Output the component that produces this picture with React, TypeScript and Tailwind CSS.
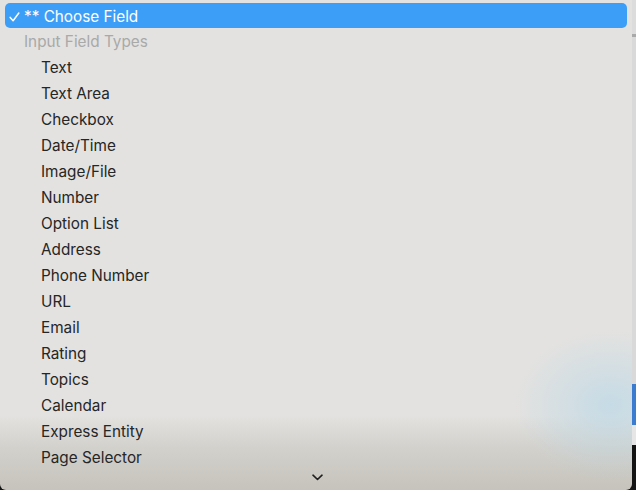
import React from "react";

const fieldTypes = [
  "Text",
  "Text Area",
  "Checkbox",
  "Date/Time",
  "Image/File",
  "Number",
  "Option List",
  "Address",
  "Phone Number",
  "URL",
  "Email",
  "Rating",
  "Topics",
  "Calendar",
  "Express Entity",
  "Page Selector",
];

const ChevronDown: React.FC = () => (
  <svg width="11" height="7" viewBox="0 0 11 7" fill="none">
    <path d="M1 1.2l4.5 4.3L10 1.2" stroke="#1f1f1f" strokeWidth="1.6" strokeLinecap="round" strokeLinejoin="round" />
  </svg>
);

const CheckMark: React.FC = () => (
  <svg width="11" height="10" viewBox="0 0 11 10" fill="none">
    <path d="M1.2 5.4l2.9 3.3L9.8 1" stroke="white" strokeWidth="1.5" strokeLinecap="round" strokeLinejoin="round" />
  </svg>
);

const FieldMenu: React.FC = () => {
  return (
    <div
      className="relative w-[632px] h-[490px] overflow-hidden rounded-b-[6px] bg-[radial-gradient(ellipse_95px_75px_at_610px_405px,rgba(185,216,232,0.7),rgba(185,216,232,0)),linear-gradient(to_bottom,#e3e2e0_0px,#e3e2e0_415px,#d3d1cc_448px,#c5c3bb_490px)] text-[15.3px] leading-none text-[#262626] font-['Inter','Liberation_Sans',sans-serif]"
    >
      <div className="mx-[5px] mt-[3px] h-[25px] pt-[2px] rounded-[5px] bg-[#3d9ef7] flex items-center text-white">
        <span className="w-[19px] pl-[4px] flex items-center">
          <CheckMark />
        </span>
        <span>** Choose Field</span>
      </div>
      <div className="h-[26px] pt-[2px] flex items-center pl-[24px] text-[#a9a9a9]">Input Field Types</div>
      {fieldTypes.map((name) => (
        <div key={name} className="h-[26px] pt-[2px] flex items-center pl-[41px]">
          {name}
        </div>
      ))}
      <div className="absolute left-[312px] bottom-[9px]">
        <ChevronDown />
      </div>
    </div>
  );
};

export default function App() {
  return (
    <div className="flex w-[636px] h-[490px] bg-[#161616]">
      <FieldMenu />
      <div className="w-[4px] flex flex-col">
        <div className="h-[34px] bg-[#dcdcdc]" />
        <div className="h-[3px] bg-[#a9a9a9]" />
        <div className="h-[347px] bg-[#d9d9d9]" />
        <div className="h-[41px] bg-[#3b7bd0]" />
        <div className="h-[20px] bg-[#e6e6e6]" />
        <div className="flex-1 bg-[#141414]" />
      </div>
    </div>
  );
}
